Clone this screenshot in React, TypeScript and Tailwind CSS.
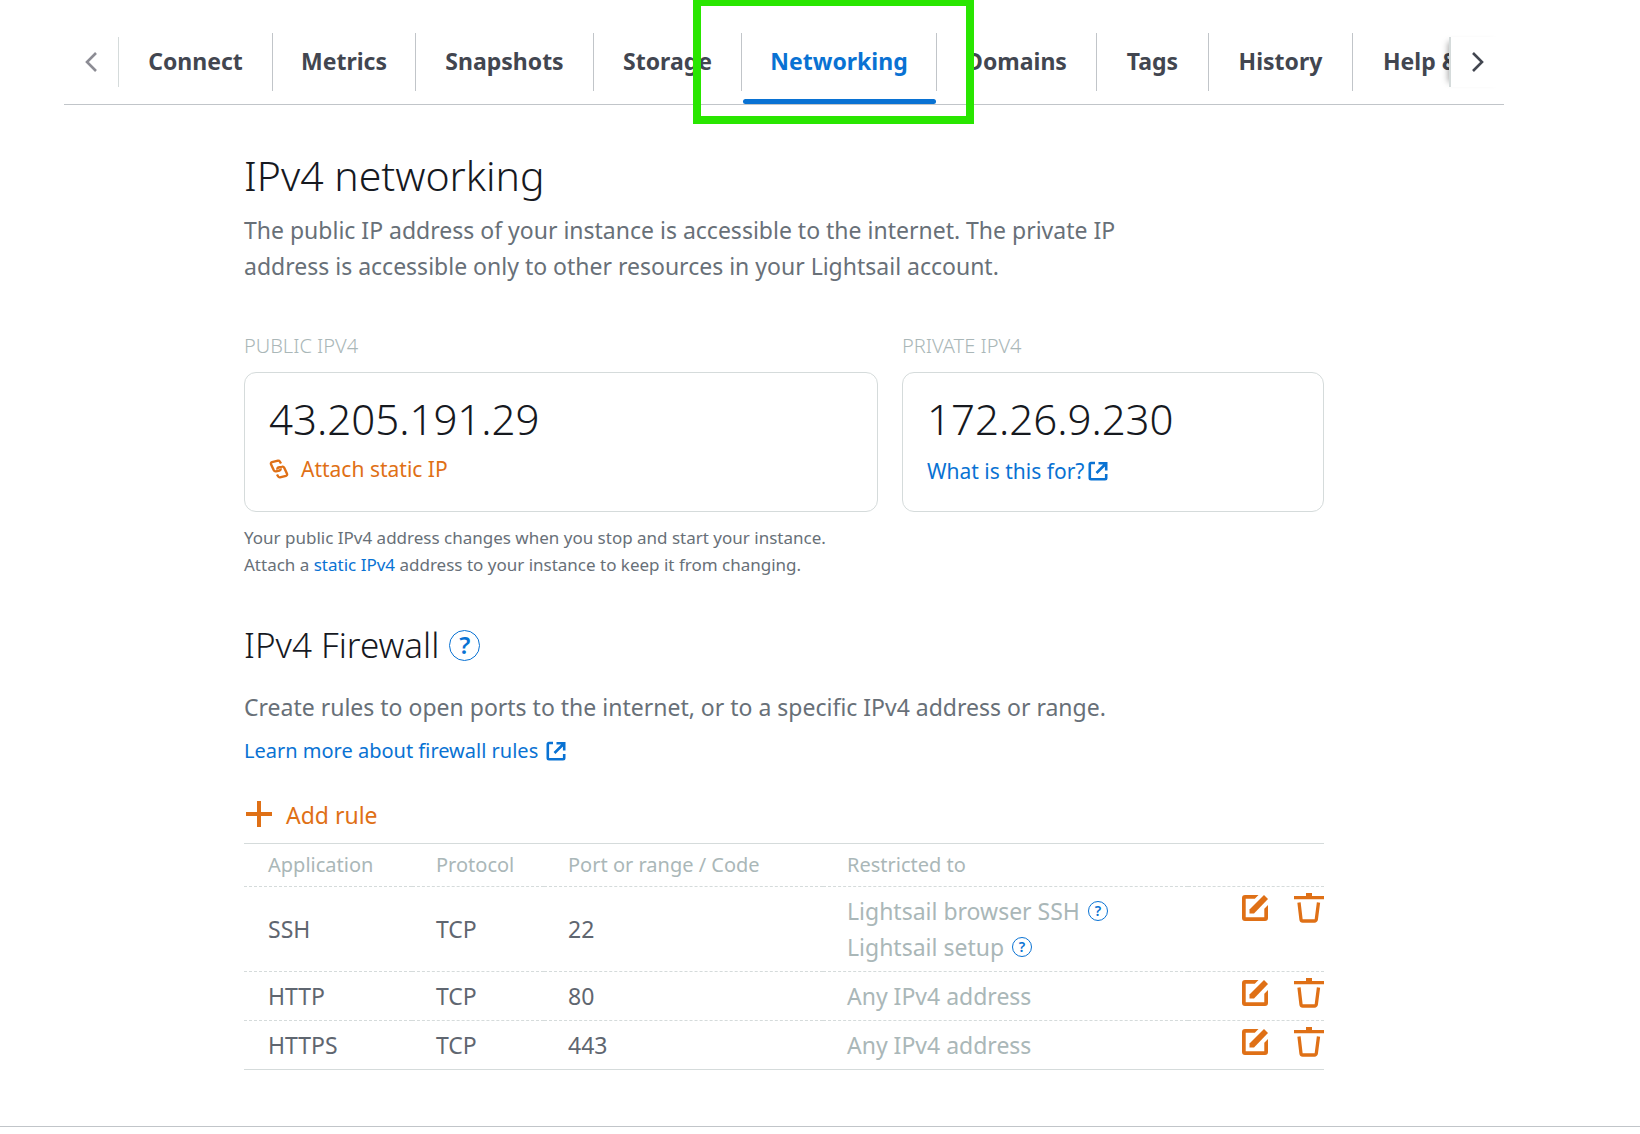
import type { ReactNode } from "react";

const tabs = [
  { name: "Connect", width: "w-[154px]" },
  { name: "Metrics", width: "w-[143px]" },
  { name: "Snapshots", width: "w-[178px]" },
  { name: "Storage", width: "w-[148px]" },
  { name: "Networking", width: "w-[195px]" },
  { name: "Domains", width: "w-[160px]" },
  { name: "Tags", width: "w-[112px]" },
  { name: "History", width: "w-[144px]" },
];

const rules = [
  { app: "SSH", protocol: "TCP", port: "22", restricted: ["Lightsail browser SSH", "Lightsail setup"], help: true },
  { app: "HTTP", protocol: "TCP", port: "80", restricted: ["Any IPv4 address"], help: false },
  { app: "HTTPS", protocol: "TCP", port: "443", restricted: ["Any IPv4 address"], help: false },
];

function ExternalIcon() {
  return (
    <svg viewBox="0 0 20 20" className="size-5 shrink-0" fill="none" stroke="currentColor" strokeWidth="2.600">
      <path d="M7 2H3Q1.800 2 1.800 3.200V17Q1.800 18.200 3 18.200H17Q18.200 18.200 18.200 17V13" />
      <path d="M10.500 2.200H18.200V9.500M17.500 3L8.500 12" />
    </svg>
  );
}

function LinkIcon() {
  return (
    <svg viewBox="0 0 20 20" className="size-5 shrink-0" fill="none" stroke="currentColor" strokeWidth="2.400" strokeLinejoin="round">
      <path d="M12 4.500L10.800 2.500Q10.200 1.500 9 1.700L3 3.200Q1.500 3.700 2 5.200L4.800 11.300Q5.500 12.700 7 12.300L10.500 11.500Q12 11 11.500 9.500" />
      <path d="M8 15.500L9.200 17.500Q9.800 18.500 11 18.300L17 16.800Q18.500 16.300 18 14.800L15.200 8.700Q14.500 7.300 13 7.700L9.500 8.500Q8 9 8.500 10.500" />
    </svg>
  );
}

function EditIcon() {
  return (
    <svg viewBox="0 0 26 26" className="size-[26px]" fill="currentColor">
      <path d="M16.500 0H3Q0 0 0 3V23Q0 26 3 26H23Q26 26 26 23V10L22.300 13.700V22.300H3.700V3.700H12.800Z" />
      <path d="M22 0L26 4L12 18.500H7.500V14.500Z" />
    </svg>
  );
}

function TrashIcon() {
  return (
    <svg viewBox="0 0 30 30" className="size-[30px]" fill="none" stroke="currentColor" strokeWidth="3.300">
      <path d="M0 4.700H30M12 1.600H18" />
      <path d="M5 9.500L7 26.500Q7.200 28 8.700 28H20.500Q22 28 22.300 26.500L24.500 9.500" />
    </svg>
  );
}

function Help({ large = false }: { large?: boolean }) {
  return (
    <button
      type="button"
      aria-label="Help"
      className={
        large
          ? "flex size-[31px] items-center justify-center rounded-full border border-[#0972d3] text-2xl leading-none font-semibold text-[#0972d3]"
          : "flex size-5 items-center justify-center rounded-full border border-[#0972d3] text-sm leading-none font-semibold text-[#0972d3]"
      }
    >
      ?
    </button>
  );
}

function IpCard({ title, ip, className, children }: { title: string; ip: string; className: string; children: ReactNode }) {
  return (
    <div className={className}>
      <h3 className="text-xl leading-[30px] font-light text-[#aab7b8] uppercase">{title}</h3>
      <div className="mt-[11px] h-[140px] rounded-xl border border-[#d5dbdb] px-6 pt-[22px]">
        <p className="text-[42px] leading-[48px] font-light text-[#16191f]">{ip}</p>
        {children}
      </div>
    </div>
  );
}

function Tabs() {
  return (
    <nav className="flex h-[105px] items-center border-b border-[#c1c5c9] pt-5">
      <button type="button" aria-label="Previous tabs" className="flex h-[50px] w-[55px] items-center justify-center border-r border-[#d5dbdb] text-[#8c8c94]">
        <svg viewBox="0 0 12 20" className="h-5 w-3" fill="none" stroke="currentColor" strokeWidth="2.600">
          <path d="M11 1L2 10L11 19" />
        </svg>
      </button>
      <div className="flex h-full min-w-0 flex-1 overflow-hidden">
        {tabs.map((tab) => (
          <div key={tab.name} className={`${tab.width} relative flex shrink-0 items-center`}>
            <a
              href={`#${tab.name.toLowerCase()}`}
              className={
                tab.name === "Networking"
                  ? "flex h-[58px] w-full items-center justify-center border-r border-[#c1c5c9] pb-0.5 text-[23px] font-bold text-[#0972d3]"
                  : "flex h-[58px] w-full items-center justify-center border-r border-[#c1c5c9] pb-0.5 text-[23px] font-bold text-[#424650]"
              }
            >
              {tab.name}
            </a>
            {tab.name === "Networking" && <span className="absolute inset-x-px bottom-0 h-[5px] rounded-sm bg-[#0972d3]" />}
          </div>
        ))}
        <a href="#help" className="flex items-center pb-0.5 pl-[30px] text-[23px] font-bold whitespace-nowrap text-[#424650]">Help &amp; support</a>
      </div>
      <button type="button" aria-label="Next tabs" className="relative flex h-[50px] w-[55px] items-center justify-center border-l-2 border-[#d5dbdb] bg-white text-[#424650] shadow-[-6px_0_6px_-5px_rgba(0,0,0,0.35)]">
        <svg viewBox="0 0 12 20" className="h-5 w-3" fill="none" stroke="currentColor" strokeWidth="2.600">
          <path d="M1 1L10 10L1 19" />
        </svg>
      </button>
    </nav>
  );
}

function FirewallTable() {
  return (
    <table className="w-full table-fixed border-y border-[#d5dbdb] text-left">
      <colgroup>
        <col className="w-[168px]" />
        <col className="w-[132px]" />
        <col className="w-[279px]" />
        <col />
        <col className="w-[136px]" />
      </colgroup>
      <thead>
        <tr className="h-[43px] text-xl text-[#aab7b8]">
          <th className="pl-6 font-normal">Application</th>
          <th className="pl-6 font-normal">Protocol</th>
          <th className="pl-6 font-normal">Port or range / Code</th>
          <th className="pl-6 font-normal">Restricted to</th>
          <th aria-label="Actions"></th>
        </tr>
      </thead>
      <tbody className="text-[23px] leading-9 text-[#5f6670]">
        {rules.map((rule) => (
          <tr key={rule.app} className="border-t border-dashed border-[#d5dbdb]">
            <td className="pl-6">{rule.app}</td>
            <td className="pl-6">{rule.protocol}</td>
            <td className="pl-6">{rule.port}</td>
            <td className="py-1.5 pl-6 text-[#aab7b8]">
              {rule.restricted.map((item) => (
                <div key={item} className="flex items-center gap-2">
                  {item}
                  {rule.help && <Help />}
                </div>
              ))}
            </td>
            <td className="pt-1.5 align-top text-[#df7016]">
              <div className="flex items-center justify-end gap-[26px]">
                <button type="button" aria-label={`Edit ${rule.app} rule`}><EditIcon /></button>
                <button type="button" aria-label={`Delete ${rule.app} rule`}><TrashIcon /></button>
              </div>
            </td>
          </tr>
        ))}
      </tbody>
    </table>
  );
}

export default function App() {
  return (
    <div className="border-b border-[#c1c5c9] bg-white pb-14 font-['Noto_Sans',sans-serif] text-[#687078]">
      <div className="relative ml-16 max-w-[1440px]">
        <Tabs />
        <div className="pointer-events-none absolute top-0 left-[629px] h-[124px] w-[281px] border-x-8 border-t-[6px] border-b-8 border-[#29e600]" />
        <main className="mx-auto max-w-[1080px] pt-[42px]">
          <h1 className="text-[41px] leading-[56px] font-light text-[#16191f]">IPv4 networking</h1>
          <p className="mt-[9px] max-w-[900px] text-[23px] leading-9">
            The public IP address of your instance is accessible to the internet. The private IP address is accessible only to other resources in your Lightsail account.
          </p>

          <div className="mt-[47px] flex gap-6">
            <IpCard title="Public IPv4" ip="43.205.191.29" className="min-w-0 flex-1">
              <button type="button" className="mt-2.5 flex items-center gap-3 text-[21px] leading-8 text-[#df7016]">
                <LinkIcon />
                Attach static IP
              </button>
            </IpCard>
            <IpCard title="Private IPv4" ip="172.26.9.230" className="w-[422px]">
              <a href="#private" className="mt-3 flex items-center gap-1 text-[21px] leading-8 text-[#0972d3]">
                What is this for?
                <ExternalIcon />
              </a>
            </IpCard>
          </div>
          <p className="mt-3 text-[17px] leading-[27px]">
            Your public IPv4 address changes when you stop and start your instance.
            <br />
            Attach a <a href="#static" className="text-[#0972d3]">static IPv4</a> address to your instance to keep it from changing.
          </p>

          <div className="mt-[43px] flex items-center gap-2.5">
            <h2 className="text-[35px] leading-[48px] font-light text-[#16191f]">IPv4 Firewall</h2>
            <Help large />
          </div>
          <p className="mt-5 text-[23px] leading-9">
            Create rules to open ports to the internet, or to a specific IPv4 address or range.
          </p>
          <a href="#rules" className="mt-2.5 flex items-center gap-2 text-xl leading-8 text-[#0972d3]">
            Learn more about firewall rules
            <ExternalIcon />
          </a>
          <button type="button" className="mt-[30px] mb-2.5 flex items-center gap-3.5 text-[23px] leading-9 text-[#df7016]">
            <svg viewBox="0 0 28 28" className="size-7" stroke="currentColor" strokeWidth="4">
              <path d="M2 13H28M15 0V26" />
            </svg>
            Add rule
          </button>
          <FirewallTable />
        </main>
      </div>
    </div>
  );
}
